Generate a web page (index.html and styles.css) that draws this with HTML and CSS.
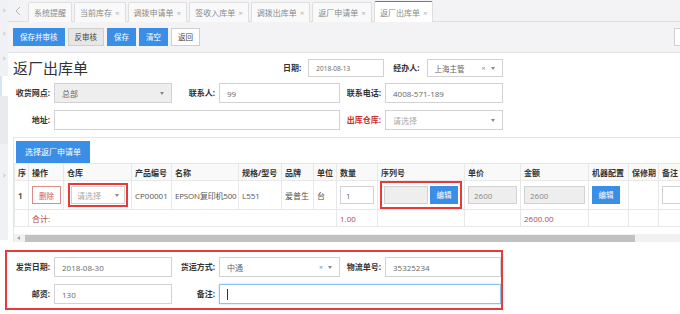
FILE: index.html
```html
<!DOCTYPE html>
<html lang="zh-CN">
<head>
  <meta charset="UTF-8">
  <title>返厂出库单</title>
  <link rel="stylesheet" href="styles.css">
</head>
<body>

<div class="top">
  <div class="side">
    <span class="side-mark m1"></span>
    <span class="side-mark m2"></span>
    <span class="side-mark m3"></span>
    <span class="side-on"></span>
    <span class="side-dark"></span>
    <span class="side-mark m4"></span>
  </div>

  <div class="main">
    <div class="tabbar">
      <span class="tab-prev">
        <svg width="6" height="10" viewBox="0 0 6 10"><polyline points="5,1 1,5 5,9" fill="none" stroke="#b5b5b5" stroke-width="1"/></svg>
      </span>
      <span class="tab">系统提醒</span>
      <span class="tab">当前库存<i>×</i></span>
      <span class="tab">调拨申请单<i>×</i></span>
      <span class="tab">签收入库单<i>×</i></span>
      <span class="tab">调拨出库单<i>×</i></span>
      <span class="tab">返厂申请单<i>×</i></span>
      <span class="tab active">返厂出库单<i>×</i></span>
    </div>

    <div class="toolbar">
      <button class="btn btn-blue">保存并审核</button>
      <button class="btn btn-gray">反审核</button>
      <button class="btn btn-blue">保存</button>
      <button class="btn btn-blue">清空</button>
      <button class="btn btn-white">返回</button>
      <span class="tool-search"></span>
    </div>

    <div class="content">
      <div class="head-row">
        <h2 class="title">返厂出库单</h2>
        <span class="lbl head-lbl">日期:</span>
        <span class="field head-field date">2018-08-13</span>
        <span class="lbl head-lbl gap">经办人:</span>
        <span class="field head-field sel">上海主管<i class="clear">×</i><b class="caret"></b></span>
      </div>

      <div class="form-grid">
        <span class="lbl">收货网点:</span>
        <span class="field dis sel">总部<b class="caret"></b></span>
        <span class="lbl">联系人:</span>
        <span class="field">99</span>
        <span class="lbl">联系电话:</span>
        <span class="field">4008-571-189</span>

        <span class="lbl">地址:</span>
        <span class="field span3"></span>
        <span class="lbl red">出库仓库:</span>
        <span class="field sel ph">请选择<b class="caret"></b></span>
      </div>

      <div class="panel">
        <button class="btn btn-blue btn-pick">选择返厂申请单</button>
        <div class="table-wrap">
          <table class="grid">
            <thead>
              <tr>
                <th class="c-no">序</th>
                <th class="c-op">操作</th>
                <th class="c-wh">仓库</th>
                <th class="c-code">产品编号</th>
                <th class="c-name">名称</th>
                <th class="c-spec">规格/型号</th>
                <th class="c-brand">品牌</th>
                <th class="c-unit">单位</th>
                <th class="c-qty">数量</th>
                <th class="c-sn">序列号</th>
                <th class="c-price">单价</th>
                <th class="c-amt">金额</th>
                <th class="c-cfg">机器配置</th>
                <th class="c-war">保修期</th>
                <th class="c-note">备注</th>
              </tr>
            </thead>
            <tbody>
              <tr class="row">
                <td class="num">1</td>
                <td><button class="btn-del">删除</button></td>
                <td>
                  <div class="mark-box">
                    <span class="field cell sel ph">请选择<b class="caret"></b></span>
                  </div>
                </td>
                <td>CP00001</td>
                <td class="tight">EPSON复印机500</td>
                <td>L551</td>
                <td>爱普生</td>
                <td>台</td>
                <td><span class="field cell">1</span></td>
                <td>
                  <div class="mark-box sn">
                    <span class="field cell dis sn-input"></span>
                    <button class="btn btn-blue btn-edit">编辑</button>
                  </div>
                </td>
                <td><span class="field cell dis muted">2600</span></td>
                <td><span class="field cell dis muted">2600</span></td>
                <td><button class="btn btn-blue btn-edit">编辑</button></td>
                <td></td>
                <td><span class="field cell"></span></td>
              </tr>
              <tr class="sum">
                <td></td>
                <td colspan="7" class="sum-txt">合计:</td>
                <td class="sum-txt">1.00</td>
                <td></td>
                <td></td>
                <td class="sum-txt">2600.00</td>
                <td></td>
                <td></td>
                <td></td>
              </tr>
            </tbody>
          </table>
        </div>
        <div class="hscroll">
          <span class="hs-arrow"></span>
          <span class="hs-thumb"></span>
        </div>
      </div>
    </div>
  </div>
</div>

<div class="ship">
  <div class="form-grid ship-grid">
    <span class="lbl">发货日期:</span>
    <span class="field">2018-08-30</span>
    <span class="lbl">货运方式:</span>
    <span class="field sel">中通<i class="clear">×</i><b class="caret"></b></span>
    <span class="lbl">物流单号:</span>
    <span class="field">35325234</span>

    <span class="lbl">邮资:</span>
    <span class="field">130</span>
    <span class="lbl">备注:</span>
    <span class="field focus span3"><span class="cursor"></span></span>
  </div>
</div>

</body>
</html>
```

FILE: styles.css
```css
* {
  box-sizing: border-box;
}

body {
  margin: 0;
  width: 680px;
  height: 314px;
  overflow: hidden;
  background: #fff;
  font-family: "Open Sans", "Noto Sans CJK SC", sans-serif;
  font-size: 8px;
  color: #555;
}

button {
  font-family: inherit;
}

.top {
  display: flex;
}

/* left menu strip */
.side {
  width: 8px;
  flex-shrink: 0;
  background: #f0f1f4;
  display: flex;
  flex-direction: column;
  height: 240px;
}

.side-mark {
  width: 3px;
  height: 3px;
  margin-left: 2px;
  border-top: 1px solid #c8c8c8;
  border-right: 1px solid #c8c8c8;
  transform: rotate(45deg);
}

.m1 { margin-top: 9px; }
.m2 { margin-top: 20px; }
.m3 { margin-top: 22px; }
.m4 { margin-top: 30px; }

.side-on {
  height: 20px;
  margin-top: 16px;
  background: #fff;
  border-left: 2px solid #d6e6f7;
}

.side-dark {
  height: 48px;
  background: #e9eaed;
}

.main {
  flex: 1;
  min-width: 0;
  overflow: hidden;
}

/* tabs */
.tabbar {
  height: 22px;
  background: #f3f3f5;
  border-bottom: 1px solid #dedede;
  display: flex;
  align-items: flex-end;
}

.tab-prev {
  width: 20px;
  height: 19px;
  display: flex;
  align-items: center;
  justify-content: center;
  margin-bottom: 1px;
}

.tab {
  height: 20px;
  margin-right: 2px;
  margin-bottom: -1px;
  padding: 0 5px;
  display: flex;
  align-items: center;
  gap: 3px;
  background: #f9f9fa;
  border: 1px solid #dedede;
  border-bottom: none;
  border-radius: 2px 2px 0 0;
  color: #8a8a8a;
  white-space: nowrap;
}

.tab i {
  font-style: normal;
  color: #b0b0b0;
  font-size: 8px;
}

.tab.active {
  background: #fff;
  border-top: 1px solid #3c8dbc;
  height: 21px;
}

/* toolbar */
.toolbar {
  height: 31px;
  background: #f3f3f6;
  border-bottom: 1px solid #e2e2e4;
  padding: 6px 0 0 5px;
  display: flex;
  align-items: flex-start;
  gap: 3px;
}

.btn {
  height: 18px;
  padding: 0 6px;
  border: 1px solid transparent;
  font-size: 7.5px;
  line-height: 16px;
  white-space: nowrap;
  cursor: pointer;
}

.btn-blue {
  background: #3b8ee6;
  border-color: #3b8ee6;
  color: #fff;
}

.btn-gray {
  background: #e6e6e6;
  border-color: #cfcfcf;
  color: #444;
}

.btn-white {
  background: #fff;
  border-color: #cfcfcf;
  color: #444;
}

.tool-search {
  width: 30px;
  height: 18px;
  margin-left: auto;
  margin-right: -24px;
  background: #fff;
  border: 1px solid #d0d0d0;
}

/* form */
.content {
  padding-left: 5px;
}

.head-row {
  display: flex;
  align-items: center;
  height: 18px;
  margin-top: 6px;
}

.title {
  width: 270px;
  margin: 0;
  font-size: 15px;
  font-weight: normal;
  color: #333;
  line-height: 18px;
}

.lbl {
  font-weight: bold;
  color: #333;
  text-align: right;
  padding-right: 4px;
  line-height: 20px;
  white-space: nowrap;
}

.lbl.red {
  color: #c9302c;
}

.head-lbl {
  padding-right: 7px;
}

.head-lbl.gap {
  margin-left: 9px;
}

.field {
  height: 20px;
  border: 1px solid #d2d2d2;
  background: #fff;
  padding: 0 7px;
  display: flex;
  align-items: center;
  color: #666;
  white-space: nowrap;
  overflow: hidden;
}

.head-field {
  width: 76px;
  height: 18px;
  font-size: 7.5px;
}

.head-field.date {
  font-size: 6.5px;
}

.field.dis {
  background: #eee;
}

.field.ph {
  color: #aaa;
}

.field.muted {
  color: #888;
}

.clear {
  margin-left: auto;
  font-style: normal;
  color: #888;
  font-size: 7px;
}

.caret {
  width: 0;
  height: 0;
  border-left: 2.5px solid transparent;
  border-right: 2.5px solid transparent;
  border-top: 3px solid #888;
  margin-left: auto;
}

.sel .clear + .caret {
  margin-left: 5px;
}

.form-grid {
  display: grid;
  grid-template-columns: 41px 118px 47px 121px 45px 118px;
  row-gap: 7px;
  margin-top: 6px;
}

.span3 {
  grid-column: span 3;
}

/* detail panel */
.panel {
  margin-top: 7px;
  border-top: 1px solid #e5e5e5;
  border-left: 1px solid #e5e5e5;
  padding-top: 3px;
}

.btn-pick {
  height: 22px;
  margin-left: 2px;
  padding: 0 8px;
  font-size: 8px;
  line-height: 20px;
}

.table-wrap {
  overflow: hidden;
}

.grid {
  table-layout: fixed;
  border-collapse: collapse;
  width: 704px;
}

.grid th,
.grid td {
  border: 1px solid #e8e8e8;
  padding: 0 3px;
  text-align: left;
  white-space: nowrap;
  overflow: hidden;
}

.grid td.tight {
  padding: 0 1px 0 3px;
  letter-spacing: -0.2px;
}

.grid th {
  height: 17px;
  background: #f9f9f9;
  color: #333;
  font-weight: bold;
}

.row td {
  height: 28px;
  color: #555;
}

.sum td {
  height: 17px;
}

.sum-txt {
  color: #b5484c;
}

.num {
  font-weight: bold;
  color: #333;
}

.c-no { width: 14px; }
.c-op { width: 35px; }
.c-wh { width: 68px; }
.c-code { width: 40px; }
.c-name { width: 67px; }
.c-spec { width: 43px; }
.c-brand { width: 32px; }
.c-unit { width: 23px; }
.c-qty { width: 41px; }
.c-sn { width: 87px; }
.c-price { width: 56px; }
.c-amt { width: 68px; }
.c-cfg { width: 40px; }
.c-war { width: 30px; }
.c-note { width: 60px; }

.btn-del {
  height: 18px;
  width: 29px;
  padding: 0;
  background: #fff;
  border: 1px solid #e08a88;
  color: #d9534f;
  font-size: 7.5px;
}

.field.cell {
  height: 18px;
  padding: 0 5px;
}

.mark-box {
  border: 2px solid #e8393b;
  padding: 1px;
  margin-left: 1px;
}

.mark-box.sn {
  display: flex;
  gap: 2px;
  padding: 3px 2px;
  margin: 0 -1px;
}

.sn-input {
  flex: 1;
}

.btn-edit {
  height: 18px;
  width: 28px;
  padding: 0;
  font-size: 7.5px;
}

/* fake horizontal scrollbar */
.hscroll {
  margin-top: 7px;
  height: 8px;
  background: #f1f1f1;
  display: flex;
  align-items: center;
}

.hs-arrow {
  width: 0;
  height: 0;
  margin-left: 3px;
  border-top: 2px solid transparent;
  border-bottom: 2px solid transparent;
  border-right: 3px solid #a3a3a3;
}

.hs-thumb {
  width: 610px;
  height: 7px;
  margin-left: 5px;
  background: #c1c1c1;
}

/* shipping box */
.ship {
  width: 498px;
  margin: 8px 0 0 5px;
  border: 2px solid #e8393b;
  padding: 5px 0 4px 6px;
}

.ship-grid {
  grid-template-columns: 41px 118px 47px 121px 45px 116px;
  margin-top: 0;
}

.field.focus {
  border-color: #8fc3ee;
  box-shadow: 0 0 2px rgba(102, 175, 233, 0.5);
}

.cursor {
  width: 1px;
  height: 11px;
  background: #333;
}
```
